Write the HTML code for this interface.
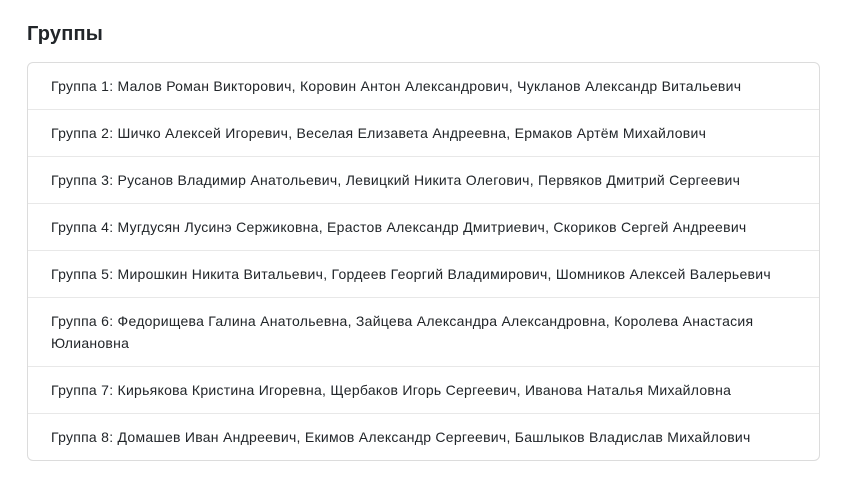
<!DOCTYPE html>
<html><head><meta charset="utf-8"><style>
body{margin:0;background:#fff;font-family:"Liberation Sans",Arial,sans-serif;color:#212529;}
h2{position:absolute;left:27px;top:20px;margin:0;font-size:20px;font-weight:bold;line-height:28px;letter-spacing:0.2px;}
ul{position:absolute;left:27px;top:62px;width:793px;margin:0;padding:0;list-style:none;border:1px solid #dcdcdc;border-radius:6px;box-sizing:border-box;}
li{padding:12px 23px;font-size:14px;line-height:22px;border-top:1px solid #e8e8e8;letter-spacing:0.27px;}
li:first-child{border-top:none;}
</style></head><body>
<h2>Группы</h2>
<ul>
<li>Группа 1: Малов Роман Викторович, Коровин Антон Александрович, Чукланов Александр Витальевич</li>
<li>Группа 2: Шичко Алексей Игоревич, Веселая Елизавета Андреевна, Ермаков Артём Михайлович</li>
<li>Группа 3: Русанов Владимир Анатольевич, Левицкий Никита Олегович, Первяков Дмитрий Сергеевич</li>
<li>Группа 4: Мугдусян Лусинэ Сержиковна, Ерастов Александр Дмитриевич, Скориков Сергей Андреевич</li>
<li>Группа 5: Мирошкин Никита Витальевич, Гордеев Георгий Владимирович, Шомников Алексей Валерьевич</li>
<li>Группа 6: Федорищева Галина Анатольевна, Зайцева Александра Александровна, Королева Анастасия<br>Юлиановна</li>
<li>Группа 7: Кирьякова Кристина Игоревна, Щербаков Игорь Сергеевич, Иванова Наталья Михайловна</li>
<li>Группа 8: Домашев Иван Андреевич, Екимов Александр Сергеевич, Башлыков Владислав Михайлович</li>
</ul>
</body></html>
